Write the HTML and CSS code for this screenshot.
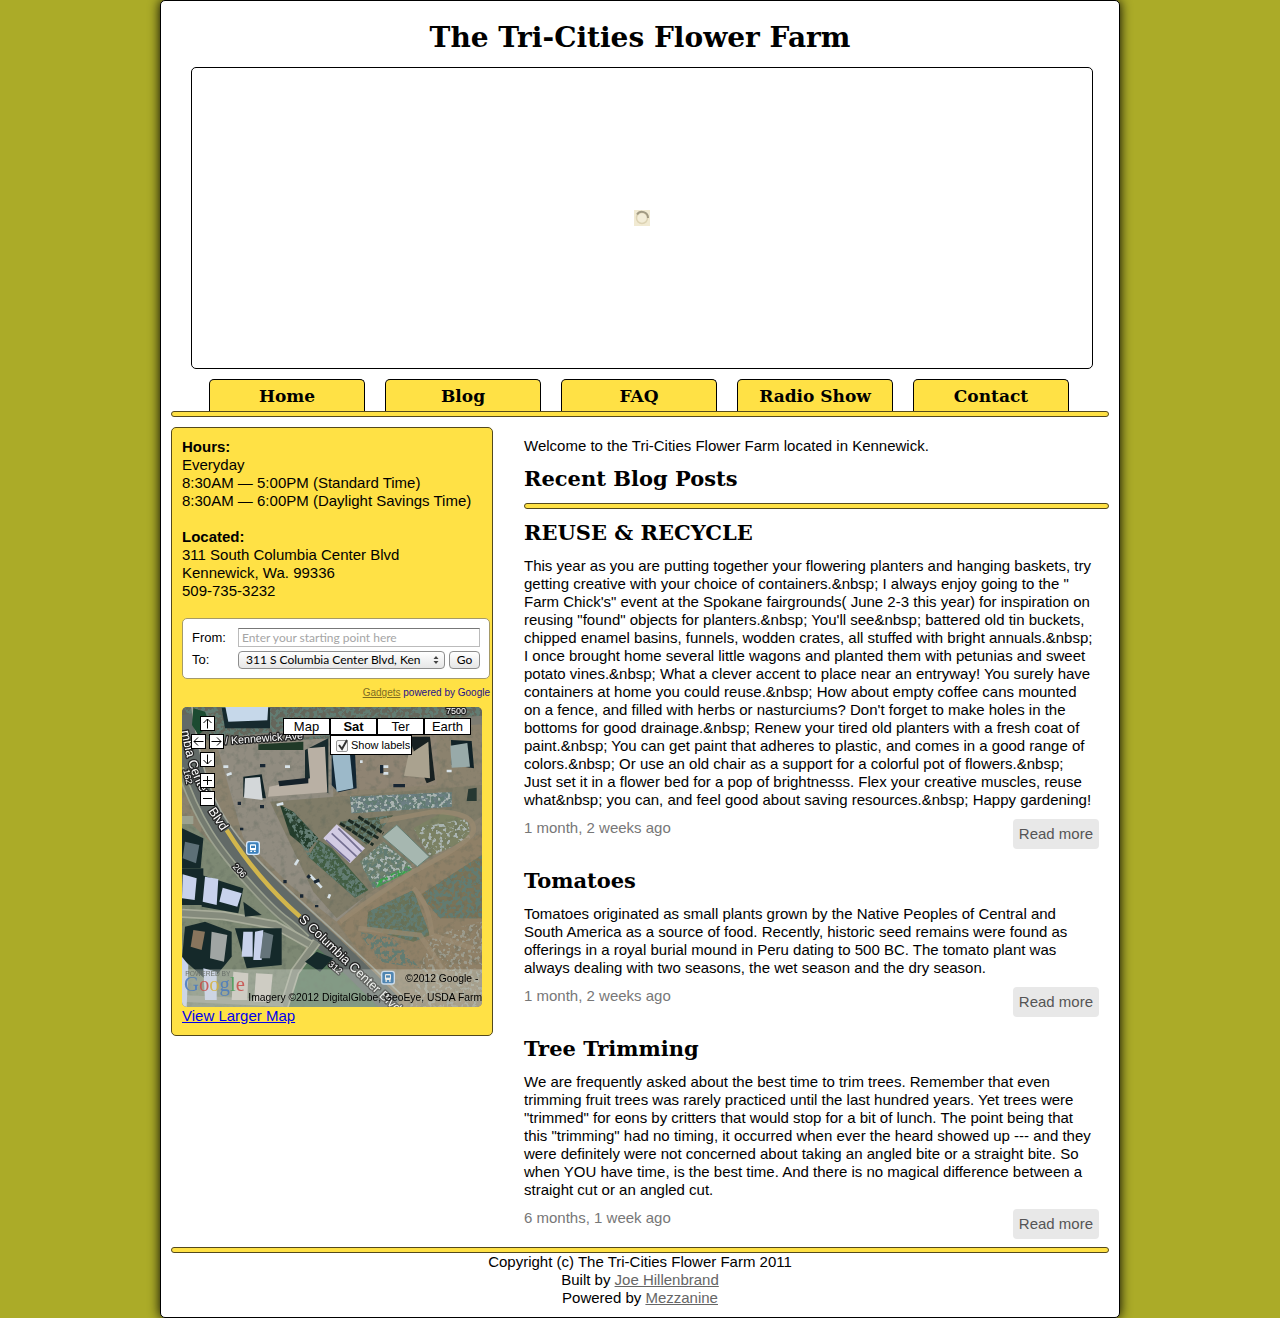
FILE: index.html
```html
<!DOCTYPE html>
<html lang="en">
<head>
<meta charset="utf-8">
<title>The Tri-Cities Flower Farm</title>
<meta name="viewport" content="width=device-width, initial-scale=1">
<link rel="stylesheet" href="styles.css">
</head>
<body>
<div class="page">
  <header>
    <h1>The Tri-Cities Flower Farm</h1>
    <div class="slider">
      <svg class="spinner" viewBox="0 0 16 16" role="img" aria-label="Loading"><rect width="16" height="16" fill="#f1ead2"/><circle cx="8" cy="8" r="5.5" fill="#f3edd8" stroke="#ddd3b4" stroke-width="1.5"/><path d="M3 4.5A6 6 0 0 1 14 8" fill="none" stroke="#a19a83" stroke-width="2"/></svg>
    </div>
    <nav class="tabs">
      <a href="#">Home</a>
      <a href="#">Blog</a>
      <a href="#">FAQ</a>
      <a href="#">Radio Show</a>
      <a href="#">Contact</a>
    </nav>
    <div class="bar"></div>
  </header>

  <div class="columns">
    <aside class="sidebar">
      <p><strong>Hours:</strong><br>Everyday<br>8:30AM — 5:00PM (Standard Time)<br>8:30AM — 6:00PM (Daylight Savings Time)</p>
      <p><strong>Located:</strong><br>311 South Columbia Center Blvd<br>Kennewick, Wa. 99336<br>509-735-3232</p>

      <form class="directions">
        <label for="from">From:</label>
        <input id="from" type="text" placeholder="Enter your starting point here">
        <label for="to">To:</label>
        <div class="destination">
          <div class="select-box">
            <select id="to"><option>311 S Columbia Center Blvd, Ken</option></select>
            <svg class="arrows" viewBox="0 0 6 8" aria-hidden="true"><path d="M3 0L5.500 3H.5zM3 8L.5 5h5z" fill="#444"/></svg>
          </div>
          <button type="button">Go</button>
        </div>
      </form>
      <p class="gadgets"><a href="#">Gadgets</a> powered by Google</p>

      <div class="map">
        <svg class="imagery" viewBox="6 6 900 900" role="img" aria-label="Satellite map of the farm">
          <defs>
            <filter id="grain" x="0" y="0" width="100%" height="100%">
              <feTurbulence type="fractalNoise" baseFrequency=".05" numOctaves="3" seed="4"/>
              <feColorMatrix values="0 0 0 0 .1  0 0 0 0 .13  0 0 0 0 .1  3 0 0 0 -1.500"/>
            </filter>
            <filter id="scrub" x="0" y="0" width="100%" height="100%">
              <feTurbulence type="fractalNoise" baseFrequency=".08" numOctaves="3" seed="9"/>
              <feColorMatrix values="0 0 0 0 .12  0 0 0 0 .2  0 0 0 0 .17  9 0 0 0 -4.100" result="n"/>
              <feComposite in="n" in2="SourceGraphic" operator="in"/>
            </filter>
            <filter id="speckle" x="0" y="0" width="100%" height="100%">
              <feTurbulence type="fractalNoise" baseFrequency=".09" numOctaves="2" seed="2"/>
              <feColorMatrix values="0 0 0 0 .4  0 0 0 0 .46  0 0 0 0 .44  0 9 0 0 -4.800" result="n"/>
              <feComposite in="n" in2="SourceGraphic" operator="in"/>
            </filter>
            <path id="road-lower" d="M355 645L470 755L650 925"/>
            <path id="road-upper" d="M4 78Q22 190 62 262L90 310"/>
          </defs>
          <rect width="910" height="910" fill="#8b826e"/>
          <!-- ground -->
          <path d="M105 100H460V290L550 580L470 650L330 540L190 400Z" fill="#918c80"/>
          <path d="M460 90H770V240L460 260Z" fill="#8f8473"/>
          <path d="M270 290L530 270L910 240V330L560 570L470 640L400 560Z" fill="#807c68"/>
          <path d="M470 650L910 380V910H660Z" fill="#8f8067"/>
          <path d="M6 330L90 410L360 690L380 720L310 910H6Z" fill="#7d8873"/>
          <path d="M6 6H910V45L460 100L100 115L6 60Z" fill="#65665b"/>
          <path d="M390 720L450 750L640 906H320L345 810Z" fill="#57775b"/>
          <!-- fields and scrub -->
          <path d="M700 370L790 320L865 350L870 400L750 455Z" fill="#7c8264"/>
          <path d="M565 620L700 555L750 690L700 710L560 670Z" fill="#6a7358"/>
          <path d="M720 570L906 450V640L780 640Z" fill="#7a7358"/>
          <path d="M300 300L340 320L415 400L385 435L330 390Z" fill="#233d2b"/>
          <path d="M415 405L455 430L565 555L525 578L385 455Z" fill="#425e43"/>
          <path d="M480 350L640 330L560 420Z" fill="#54604b"/>
          <path d="M610 410L695 480L580 550L540 470Z" fill="#71826f"/>
          <path d="M575 535L690 480L695 495L590 548Z" fill="#39a54a"/>
          <path d="M510 275L815 262V305L515 325Z" fill="#6c7f83"/>
          <rect width="910" height="910" filter="url(#grain)" opacity=".35"/>
          <g filter="url(#scrub)">
            <path d="M565 620L700 555L750 690L700 710L560 670Z"/>
            <path d="M720 570L906 450V640L780 640Z"/>
            <path d="M300 300L340 320L415 400L565 555L525 578L385 455Z"/>
            <path d="M480 350L640 330L560 420Z"/>
            <path d="M510 275L815 262V305L515 325Z"/>
            <path d="M535 680L640 700L720 790L600 770Z"/>
            <path d="M610 410L700 490L580 550L540 470Z"/>
            <path d="M6 6H910V45L460 100L100 115Z"/>
          </g>
          <g filter="url(#speckle)">
            <path d="M610 410L700 490L580 550L540 470Z"/>
            <path d="M510 275L815 262V305L515 325Z"/>
            <path d="M700 370L865 340L870 400L750 455Z"/>
            <path d="M750 690L906 650V906H690Z" opacity=".5"/>
          </g>
          <path d="M480 650Q560 590 700 500Q860 420 880 380Q890 320 760 320L600 350M700 550Q750 600 755 690L880 730M535 670L720 690L800 810" fill="none" stroke="#9a8a70" stroke-width="15" opacity=".75"/>
          <path d="M480 355L580 420M505 345L595 400M535 335L610 385" stroke="#1c2a23" stroke-width="9" stroke-dasharray="18 4"/>
          <!-- streets -->
          <path d="M6 30C40 250 85 340 185 460S380 640 640 906" fill="none" stroke="#626a67" stroke-width="64"/>
          <path d="M36 6C70 250 120 340 220 450S430 640 680 885" fill="none" stroke="#a4a79b" stroke-width="5"/>
          <path d="M0 190C50 340 110 430 220 550S300 620 380 700M6 345H40" fill="none" stroke="#9ba18f" stroke-width="24"/>
          <path d="M0 190C50 340 110 430 220 550S300 620 380 700" fill="none" stroke="#747b70" stroke-width="14"/>
          <path d="M6 625L130 632L285 660L390 718M410 710L345 800L312 906" fill="none" stroke="#a9ad9b" stroke-width="28"/>
          <path d="M6 625L130 632L285 660L390 718M410 710L345 800L312 906" fill="none" stroke="#858b7d" stroke-width="18"/>
          <path d="M6 880L310 895" stroke="#959a8d" stroke-width="20"/>
          <path d="M140 375Q230 520 360 635" fill="none" stroke="#d2b64c" stroke-width="13"/>
          <path d="M115 112L460 75L906 45" fill="none" stroke="#7d7c72" stroke-width="26"/>
          <!-- buildings north of the road -->
          <path d="M125 8H270V70H135Z" fill="#172a2e"/><path d="M135 0H265L262 46L145 50Z" fill="#c6d8ea"/>
          <path d="M40 10L75 20L90 60L55 90L36 60Z" fill="#1c4b31"/>
          <path d="M190 215L245 208L258 280L190 275Z" fill="#112327"/><path d="M195 220L240 216L248 285L192 278Z" fill="#d3d7d9"/>
          <path d="M375 135L445 100V265L375 220Z" fill="#182a2c"/><path d="M383 130L435 125L442 262L264 275L268 245L390 220Z" fill="#b9b0a4"/>
          <path d="M295 228L385 218V235L298 244Z" fill="#152129"/><path d="M455 140H525L530 250L475 262L455 240Z" fill="#122633"/>
          <path d="M457 148L510 150L520 250L470 260Z" fill="#9cb9c9"/><path d="M685 95H750L765 225L740 235Z" fill="#172021"/>
          <path d="M685 150L745 110L750 220L672 212Z" fill="#aaa28f"/><path d="M813 105L875 108L882 190L815 180Z" fill="#112227"/>
          <path d="M811 122L862 114L870 185L815 188Z" fill="#98aaa9"/><path d="M235 118L370 110V135H235Z" fill="#203927"/>
          <path d="M865 252L890 248V288H860Z" fill="#263832"/>
          <path d="M430 400L470 358L555 430L510 475Z" fill="#d2cbe3"/><path d="M455 385L530 455M475 370L545 440M438 405L510 470" stroke="#746f91" stroke-width="5"/>
          <path d="M608 395L650 360L748 455L712 485Z" fill="#a6b7b0" stroke="#657f73" stroke-width="3"/>
          <!-- houses -->
          <g fill="#15292a"><path d="M6 370L70 400L62 490H6Z"/><path d="M6 490H70V600H6Z"/><path d="M65 510L190 550L175 625L65 605Z"/><path d="M15 665L75 650L155 680V755L90 835L6 760Z"/><path d="M165 670H305V780L200 790Z"/><path d="M375 770L410 740L460 760L420 800Z"/><path d="M190 590L245 630L195 635Z"/></g>
          <g fill="#c8d2ec"><path d="M8 508L50 520L44 585L6 580Z"/><path d="M75 515L115 522L110 600L68 590Z"/><path d="M128 548L185 565L172 605L118 590Z"/><path d="M190 680H218V755H185Z"/><path d="M225 680L250 675L245 765H220Z"/><path d="M6 755L25 780L20 906H6Z"/><path d="M70 790L110 800V885H75Z"/></g>
          <path d="M15 410L58 420L48 475L8 460Z" fill="#5d7077"/><path d="M95 680L142 690L132 770L90 760Z" fill="#a0a5a3"/><path d="M40 675L75 680L65 735L32 725Z" fill="#88755d"/><path d="M250 680L280 690L270 760H240Z" fill="#65747a"/>
          <path d="M160 800L205 805L202 885H155ZM228 805L278 808L270 890H222Z" fill="#c9c3bb"/>
          <!-- parked cars -->
          <g stroke="#d7e2e8" stroke-width="8"><path d="M345 480L355 464M390 510L425 548M445 580L450 568M315 185H330M600 185H625M540 170H548M140 210L155 205M290 300L310 295M800 198H815M610 205H625M130 185H145"/></g>
          <g stroke="#182633" stroke-width="10"><path d="M382 512L390 518M402 532L418 525M365 568V578M240 182H256M640 242H675M178 290V300M315 525V535M240 305H252M605 180V205M185 368V376M410 600V607"/></g>
          <g class="street">
            <text><textPath href="#road-upper">mbia Center</textPath></text>
            <text transform="translate(84 318) rotate(56)">Blvd</text>
            <text><textPath href="#road-lower">S Columbia Center Blvd</textPath></text>
            <text class="avenue" transform="translate(136 118) rotate(-4)">/ Kennewick Ave</text>
            <g class="numbers"><text transform="translate(157 486) rotate(48)">206</text><text transform="translate(443 780) rotate(40)">312</text><text x="798" y="27">7500</text><text transform="translate(10 195) rotate(78)">162</text></g>
          </g>
          <rect x="6" y="793" width="900" height="113" fill="#d7ddd4" opacity=".35"/>
          <g id="stop"><rect x="200" y="410" width="38" height="38" rx="7" fill="#3c80bb" stroke="#d8eaff" stroke-width="4"/><rect x="210" y="418" width="18" height="18" rx="3" fill="#fff"/><path d="M213 422h12v7h-12z" fill="#3c80bb"/><path d="M211 439h5M222 439h5" stroke="#fff" stroke-width="4"/></g>
          <use href="#stop" x="405" y="389" opacity=".8"/>
          <text class="powered" x="16" y="812">POWERED BY</text>
          <text class="google" x="12" y="859"><tspan fill="#487ac0">G</tspan><tspan fill="#c84b48">o</tspan><tspan fill="#d6b23c">o</tspan><tspan fill="#487ac0">g</tspan><tspan fill="#489b58">l</tspan><tspan fill="#c84b48">e</tspan></text>
          <text class="credit" x="676" y="830">©2012 Google -</text>
          <text class="credit" x="205" y="887">Imagery ©2012 DigitalGlobe, GeoEye, USDA Farm</text>
        </svg>
        <div class="controls">
          <button type="button" class="up" aria-label="Pan up"><svg viewBox="0 0 11 11"><path d="M5.500 10.500V1M1.500 5L5.500 1L9.500 5"/></svg></button>
          <button type="button" class="left" aria-label="Pan left"><svg viewBox="0 0 11 11"><path d="M10.500 5.500H1M5 1.500L1 5.500L5 9.500"/></svg></button>
          <button type="button" class="right" aria-label="Pan right"><svg viewBox="0 0 11 11"><path d="M.5 5.500H10M6 1.500L10 5.500L6 9.500"/></svg></button>
          <button type="button" class="down" aria-label="Pan down"><svg viewBox="0 0 11 11"><path d="M5.500 .5V10M1.500 6L5.500 10L9.500 6"/></svg></button>
          <button type="button" class="in" aria-label="Zoom in"><svg viewBox="0 0 11 11"><path d="M5.500 1V10M1 5.500H10"/></svg></button>
          <button type="button" class="out" aria-label="Zoom out"><svg viewBox="0 0 11 11"><path d="M1 5.500H10"/></svg></button>
        </div>
        <div class="types">
          <button type="button">Map</button><button type="button" class="on">Sat</button><button type="button">Ter</button><button type="button">Earth</button>
        </div>
        <label class="labels"><span class="tick"><input type="checkbox" checked><svg viewBox="0 0 13 13" aria-hidden="true"><path d="M3 6L6 10L11 1" fill="none" stroke="#333" stroke-width="2"/></svg></span>Show labels</label>
      </div>
      <a class="larger" href="#">View Larger Map</a>
    </aside>

    <main>
      <p>Welcome to the Tri-Cities Flower Farm located in Kennewick.</p>
      <h2>Recent Blog Posts</h2>
      <div class="bar"></div>

      <article>
        <h3>REUSE &amp; RECYCLE</h3>
        <p>This year as you are putting together your flowering planters and hanging baskets, try<br>getting creative with your choice of containers.&amp;nbsp; I always enjoy going to the "<br>Farm Chick's" event at the Spokane fairgrounds( June 2-3 this year) for inspiration on<br>reusing "found" objects for planters.&amp;nbsp; You'll see&amp;nbsp; battered old tin buckets,<br>chipped enamel basins, funnels, wodden crates, all stuffed with bright annuals.&amp;nbsp;<br>I once brought home several little wagons and planted them with petunias and sweet<br>potato vines.&amp;nbsp; What a clever accent to place near an entryway! You surely have<br>containers at home you could reuse.&amp;nbsp; How about empty coffee cans mounted<br>on a fence, and filled with herbs or nasturciums? Don't forget to make holes in the<br>bottoms for good drainage.&amp;nbsp; Renew your tired old planters with a fresh coat of<br>paint.&amp;nbsp; You can get paint that adheres to plastic, and comes in a good range of<br>colors.&amp;nbsp; Or use an old chair as a support for a colorful pot of flowers.&amp;nbsp;<br>Just set it in a flower bed for a pop of brightnesss. Flex your creative muscles, reuse<br>what&amp;nbsp; you can, and feel good about saving resources.&amp;nbsp; Happy gardening!</p>
        <div class="meta"><span>1 month, 2 weeks ago</span><a href="#">Read more</a></div>
      </article>
      <article>
        <h3>Tomatoes</h3>
        <p>Tomatoes originated as small plants grown by the Native Peoples of Central and<br>South America as a source of food. Recently, historic seed remains were found as<br>offerings in a royal burial mound in Peru dating to 500 BC. The tomato plant was<br>always dealing with two seasons, the wet season and the dry season.</p>
        <div class="meta"><span>1 month, 2 weeks ago</span><a href="#">Read more</a></div>
      </article>
      <article>
        <h3>Tree Trimming</h3>
        <p>We are frequently asked about the best time to trim trees. Remember that even<br>trimming fruit trees was rarely practiced until the last hundred years. Yet trees were<br>"trimmed" for eons by critters that would stop for a bit of lunch. The point being that<br>this "trimming" had no timing, it occurred when ever the heard showed up --- and they<br>were definitely were not concerned about taking an angled bite or a straight bite. So<br>when YOU have time, is the best time. And there is no magical difference between a<br>straight cut or an angled cut.</p>
        <div class="meta"><span>6 months, 1 week ago</span><a href="#">Read more</a></div>
      </article>
    </main>
  </div>

  <footer>
    <div class="bar"></div>
    <p>Copyright (c) The Tri-Cities Flower Farm 2011<br>Built by <a href="#">Joe Hillenbrand</a><br>Powered by <a href="#">Mezzanine</a></p>
  </footer>
</div>
</body>
</html>
```
FILE: styles.css
```css
* { box-sizing: border-box; }
body { margin: 0; background: #abab28; color: #000; font: 15px/18px "Liberation Sans", Arial, sans-serif; }
h1, h2, h3, p { margin: 0; }
h1, h2, h3, .tabs { font-family: Georgia, "DejaVu Serif", serif; font-weight: bold; }
button, input, select { font-family: inherit; margin: 0; }

.page { max-width: 960px; margin: 0 auto; padding: 0 10px 10px; background: #fff; border: 1px solid #000; border-radius: 5px; box-shadow: 0 0 12px #000; }
h1 { padding-top: 18px; font-size: 28px; line-height: 38px; text-align: center; }
.slider { display: flex; align-items: center; justify-content: center; height: 302px; margin: 10px 16px 10px 20px; border: 1px solid #000; border-radius: 5px; }
.spinner { width: 16px; height: 16px; }
.tabs { display: flex; gap: 20px; padding: 0 40px 0 38px; font-size: 17px; line-height: 32px; }
.tabs a { flex: 1; height: 32px; border: 1px solid #000; border-bottom: 0; border-radius: 5px 5px 0 0; background: #ffe145; color: #000; text-align: center; text-decoration: none; }
.bar { height: 6px; border: 1px solid #54491c; border-radius: 3px; background: #ffe145; }

.columns { display: flex; align-items: flex-start; gap: 31px; padding-top: 10px; }
.sidebar { flex: 0 0 322px; padding: 10px 2px 10px 10px; border: 1px solid #54491c; border-radius: 5px; background: #ffe145; }
.sidebar p { margin-bottom: 18px; }
.directions { display: grid; grid-template-columns: 46px 1fr; gap: 3px 0; align-items: center; height: 61px; padding: 9px; border: 1px solid #a59a68; border-radius: 5px; background: #fff; font-size: 13px; }
.directions input { width: 100%; height: 19px; padding: 0 3px; border: 1px solid #bbb; border-top-color: #777; font: 12px "Lato", sans-serif; }
.directions input::placeholder { color: #a5a5a5; }
.destination { display: flex; gap: 4px; }
.select-box { position: relative; flex: 1; }
.directions select, .directions button { height: 18px; border: 1px solid #8d8d8d; border-radius: 4px; background: linear-gradient(#fff, #e6e6e6); color: #000; font: 12px "Lato", sans-serif; }
.directions select { display: block; width: 100%; padding: 0 7px; appearance: none; }
.directions button { width: 31px; padding: 0; }
.arrows { position: absolute; right: 6px; top: 5px; width: 6px; height: 8px; }
.sidebar .gadgets { margin: 5px 0; color: #1d0f8c; font-size: 10px; text-align: right; }
.gadgets a { color: #7d6b23; }

.map { position: relative; width: 300px; height: 300px; overflow: hidden; border-radius: 5px; font-size: 12px; }
.imagery { display: block; width: 300px; height: 300px; }
.street { fill: #fff; stroke: #252525; stroke-width: 8px; stroke-linejoin: round; paint-order: stroke; font-size: 38px; }
.avenue { font-size: 32px; }
.numbers { font-size: 27px; }
.powered { fill: #6c726c; font-size: 20px; }
.google { font: 62px "Liberation Serif", serif; opacity: .85; }
.credit { font-size: 31px; }
.controls { position: absolute; left: 9px; top: 9px; display: grid; grid-template: repeat(5, 18px) / repeat(4, 9px); }
.controls button { width: 15px; height: 15px; padding: 1px; border: 1px solid #000; background: #fff; }
.controls svg { display: block; width: 11px; height: 11px; fill: none; stroke: #000; }
.up { grid-area: 1 / 2; }
.left { grid-area: 2 / 1; }
.right { grid-area: 2 / 3; }
.down { grid-area: 3 / 2; }
.in { grid-area: 4 / 2; }
.out { grid-area: 5 / 2; }
.controls .in, .controls .out { margin-top: 3px; }
.types { position: absolute; left: 101px; top: 11px; display: flex; }
.types button { width: 47px; height: 17px; padding: 0; border: 1px solid #000; background: #fff; color: #000; font-size: 13px; line-height: 15px; }
.types .on { font-weight: bold; }
.labels { position: absolute; left: 148px; top: 28px; display: flex; align-items: center; gap: 2px; width: 82px; height: 20px; padding-left: 5px; border: 1px solid #000; background: #fff; font-size: 11px; white-space: nowrap; }
.tick { position: relative; width: 13px; height: 13px; }
.tick input { display: block; width: 12px; height: 12px; margin: 1px 0 0; appearance: none; border: 1px solid #999; border-radius: 2px; background: #f6f6f6; }
.tick svg { position: absolute; inset: 0; }
.larger { color: #00e; }

main { flex: 1; padding-top: 10px; }
h2, h3 { font-size: 21px; line-height: 28px; }
h2 { margin: 10px 0; }
h3 { padding-top: 10px; margin-bottom: 10px; }
article + article { padding-top: 8px; }
.meta { display: flex; justify-content: space-between; align-items: flex-start; margin: 10px 10px 0 0; color: #777; }
.meta a { padding: 6px; border-radius: 4px; background: #e8e8e8; color: #555; text-decoration: none; }

footer { padding-top: 8px; text-align: center; }
footer a { color: #666; }
```
